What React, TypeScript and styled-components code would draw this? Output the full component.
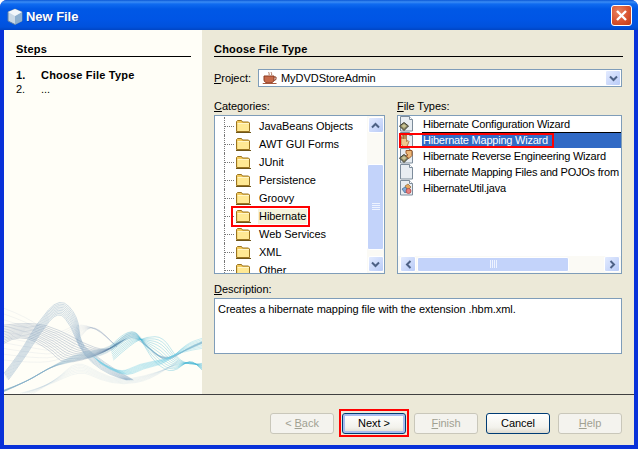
import React from 'react';
import styled, { createGlobalStyle } from 'styled-components';

const GlobalStyle = createGlobalStyle`
html, body { margin: 0; padding: 0; background: #fff; }
body { font-family: "Liberation Sans", "DejaVu Sans", sans-serif; font-size: 11px; letter-spacing: -0.05px; color: #000; }
`;

const Window = styled.div`
width: 638px;
height: 449px;
display: flex;
flex-direction: column;
overflow: hidden;
border-radius: 7px 7px 0 0;
background: #0831d9;
`;

const TitleBar = styled.div`
height: 30px;
flex: none;
display: flex;
align-items: center;
padding: 3px 6px 0 7px;
gap: 3px;
box-sizing: border-box;
background: linear-gradient(180deg, #0a57d6 0, #3a8cf5 2px, #0f6bf0 4px, #0058e6 9px, #0055e5 20px, #0051dc 27px, #0045c4 30px);
`;

const TitleText = styled.span`
flex: 1;
color: #fff;
font-size: 13px;
font-weight: 700;
text-shadow: 1px 1px 0 #0b3ca8;
`;

const CloseButton = styled.div`
width: 21px;
height: 21px;
margin-top: -3px;
box-sizing: border-box;
border: 1px solid #fff;
border-radius: 3px;
background: radial-gradient(circle at 35% 30%, #e8825f, #d9532f 55%, #bd3a16);
display: flex;
align-items: center;
justify-content: center;
`;

const Body = styled.div`
flex: 1;
display: flex;
flex-direction: column;
margin: 0 4px 4px;
background: #ece9d8;
min-height: 0;
`;

const Main = styled.div`
height: 364px;
flex: none;
display: flex;
`;

const StepsPane = styled.div`
width: 198px;
flex: none;
display: flex;
flex-direction: column;
background: #fffef7;
`;

const Heading = styled.div<{ $inset: string }>`
margin: 12px ${p => p.$inset} 0 0;
height: 14px;
line-height: 14px;
font-weight: 700;
letter-spacing: 0.2px;
border-bottom: 1px solid #000;
`;

const StepsInner = styled.div`
padding-left: 12px;
`;

const StepList = styled.div`
margin-top: 11px;
`;

const StepRow = styled.div<{ $current?: boolean }>`
display: flex;
height: 14px;
line-height: 14px;
font-weight: ${p => (p.$current ? 700 : 400)};
letter-spacing: ${p => (p.$current ? '0.2px' : '0')};
`;

const StepNum = styled.span`
width: 25px;
`;

const Wave = styled.svg`
display: block;
margin-top: auto;
width: 198px;
height: 94px;
`;

const ContentPane = styled.div`
flex: 1;
padding: 0 11px 0 12px;
min-width: 0;
`;

const ProjectRow = styled.div`
display: flex;
align-items: center;
margin-top: 12px;
`;

const ProjectLabel = styled.span`
width: 44px;
`;

const Combo = styled.div`
flex: 1;
height: 18px;
margin-right: 1px;
box-sizing: border-box;
border: 1px solid #7f9db9;
background: #fff;
display: flex;
align-items: center;
padding-left: 3px;
gap: 3px;
`;

const ComboText = styled.span`
flex: 1;
`;

const ArrowButton = styled.div`
width: 16px;
height: 16px;
flex: none;
box-sizing: border-box;
border: 1px solid #fff;
border-radius: 2px;
background: linear-gradient(135deg, #e3ebff, #b9cbf7);
display: flex;
align-items: center;
justify-content: center;
`;

const Columns = styled.div`
display: flex;
gap: 12px;
margin-top: 12px;
`;

const Column = styled.div<{ $width: number }>`
width: ${p => p.$width}px;
`;

const Label = styled.div`
height: 14px;
line-height: 14px;
margin-bottom: 2px;
`;

const ListBox = styled.div`
height: 159px;
box-sizing: border-box;
border: 1px solid #7f9db9;
background: #fff;
display: flex;
overflow: hidden;
`;

const TreeBody = styled.div`
flex: 1;
padding-top: 1px;
overflow: hidden;
`;

const TreeRow = styled.div`
height: 18px;
margin-left: 9px;
border-left: 1px dotted #777;
display: flex;
align-items: center;
`;

const Connector = styled.span`
width: 9px;
flex: none;
border-top: 1px dotted #777;
`;

const TreeItem = styled.span<{ $marked?: boolean }>`
display: flex;
align-items: center;
height: 15px;
padding-left: 1px;
outline: ${p => (p.$marked ? '2px solid #f00' : 'none')};
outline-offset: 1px;
`;

const TreeLabel = styled.span<{ $active?: boolean }>`
margin-left: 7px;
padding: 0 1px;
line-height: 15px;
background: ${p => (p.$active ? '#f5f3dc' : 'transparent')};
white-space: nowrap;
`;

const VScroll = styled.div`
width: 17px;
flex: none;
display: flex;
flex-direction: column;
align-items: center;
padding: 1px 0;
box-sizing: border-box;
background: #fbfaf5;
`;

const VTrack = styled.div`
flex: 1;
width: 100%;
padding: 31px 0 6px;
box-sizing: border-box;
display: flex;
justify-content: center;
`;

const Thumb = styled.div`
flex: 1;
box-sizing: border-box;
border: 1px solid #fff;
border-radius: 2px;
background: #c3d3fa;
display: flex;
align-items: center;
justify-content: center;
`;

const FileList = styled.div`
flex: 1;
min-width: 0;
display: flex;
flex-direction: column;
`;

const FileRows = styled.div`
flex: 1;
overflow: hidden;
`;

const FileRow = styled.div`
position: relative;
height: 16px;
display: flex;
align-items: center;
`;

const IconSlot = styled.span`
width: 24px;
padding-left: 1px;
box-sizing: border-box;
flex: none;
display: flex;
`;

const FileLabel = styled.span<{ $selected?: boolean }>`
flex: 1;
box-sizing: border-box;
height: 16px;
line-height: 16px;
padding-left: 1px;
letter-spacing: -0.22px;
white-space: nowrap;
overflow: hidden;
color: ${p => (p.$selected ? '#fff' : '#000')};
background: ${p => (p.$selected ? '#316ac5' : 'transparent')};
box-shadow: ${p => (p.$selected ? 'inset 0 1px 0 #000' : 'none')};
`;

const RedBox = styled.div`
position: absolute;
left: 1px;
top: 1px;
width: 151px;
height: 11px;
border: 2px solid #f00;
pointer-events: none;
`;

const HScroll = styled.div`
height: 16px;
flex: none;
display: flex;
align-items: center;
padding: 0 1px 1px 2px;
background: #fbfaf5;
`;

const HThumb = styled(Thumb)`
flex: none;
width: 152px;
height: 15px;
margin-left: 1px;
`;

const HGap = styled.div`
flex: 1;
`;

const DescBox = styled.div`
height: 56px;
box-sizing: border-box;
border: 1px solid #7f9db9;
background: #fff;
padding: 3px 3px;
line-height: 15px;
margin-right: 1px;
`;

const DescLabel = styled(Label)`
margin-top: 8px;
`;

const Footer = styled.div`
flex: 1;
border-top: 1px solid #404040;
display: flex;
align-items: flex-start;
justify-content: flex-end;
gap: 8px;
padding: 18px 12px 0 0;
`;

const Button = styled.div<{ $kind: 'disabled' | 'normal' | 'default' }>`
width: 64px;
height: 21px;
box-sizing: border-box;
border-radius: 3px;
text-align: center;
line-height: 19px;
border: 1px solid ${p => (p.$kind === 'disabled' ? '#c9c7ba' : '#003c74')};
color: ${p => (p.$kind === 'disabled' ? '#a1a192' : '#000')};
background: ${p => (p.$kind === 'disabled' ? '#f4f3ee' : 'linear-gradient(180deg, #fff, #f3f2ec 70%, #dedbd0)')};
box-shadow: ${p => (p.$kind === 'default' ? 'inset 0 0 0 2px #a9bdf0' : 'none')};
`;

const MarkedFrame = styled.div`
border: 2px solid #f00;
padding: 2px 1px 1px;
margin: -4px -3px -3px;
`;

const Key = styled.span`
text-decoration: underline;
`;

/* icons */
const FolderIcon = () => (
  <svg width="16" height="14" viewBox="0 0 16 14" style={{ flex: 'none' }}>
    <path d="M1.500 12.500V2.500l1-1h4l1 1.500h6l1 1v8.500z" fill="#f3c95a" stroke="#9a7420" />
    <path d="M2.500 5h11.500v7H2.500z" fill="#ffe994" />
    <path d="M2.500 4.500h11.500" stroke="#fff6c8" />
    <path d="M1 13.500h15" stroke="#6e5518" />
  </svg>
);

const CupIcon = () => (
  <svg width="16" height="14" viewBox="0 0 16 14">
    <path d="M7 1c-1 1 1 1.500 0 3M9.500 1c-1 1 1 1.500 0 3" stroke="#b0745c" fill="none" />
    <path d="M2 5h10v4c0 2-2 3-5 3s-5-1-5-3z" fill="#c66a4a" stroke="#8a3a20" />
    <path d="M12 6h2v2.500l-2 1" fill="none" stroke="#8a3a20" />
    <path d="M0.500 12h14v1H1z" fill="#a8593e" />
  </svg>
);

const CubeIcon = () => (
  <svg width="16" height="17" viewBox="0 0 16 17">
    <path d="M8 1l7 3v9l-7 3.500L1 13V4z" fill="#c9d8e6" stroke="#5a7fa8" />
    <path d="M8 8l7-4v9l-7 3.500z" fill="#8fb0cf" />
    <path d="M1 4l7 4 7-4-7-3z" fill="#f2f6fa" />
  </svg>
);

const PageBase = () => (
  <>
    <path d="M1.500 .5h9l3 3v11.500h-12z" fill="#e8edf2" stroke="#7d8c9b" />
    <path d="M10.500 .5v3h3" fill="#fff" stroke="#7d8c9b" />
  </>
);

const HibernateIcon = ({ kind }: { kind: string }) => (
  <svg width="16" height="16" viewBox="0 0 16 16">
    <PageBase />
    {(kind === 'config' || kind === 'reverse') && (
      <>
        <path d="M0.500 10l4.500-3.500 4.500 3.500-4.500 4.500z" fill="#8e8a62" stroke="#3c3c32" />
        <path d="M2.500 10l2.500-2 2.500 2-2.500 2z" fill="#c9c498" />
      </>
    )}
    {kind === 'reverse' && <path d="M7 2.500h6v5l-3 3-3-2.500 2-1-2-1.500z" fill="#edb878" stroke="#9a5a2a" />}
    {kind === 'hand' && (
      <path d="M2 8V5h1v2V3h1.500v4V2h1.500v5V3h1.500v6.500L9 8.500l1 1-2 5H4l-2-3z" fill="#f0c890" stroke="#a06a3a" strokeWidth=".8" />
    )}
    {kind === 'util' && (
      <>
        <path d="M6 6l3-2 3 3-3 3z" fill="#e8a860" stroke="#8a6a3a" strokeWidth=".7" />
        <path d="M3 9l3-2 3 3-3 3z" fill="#7fa8d8" stroke="#44688a" strokeWidth=".7" />
        <circle cx="9.500" cy="11" r="2.500" fill="#e87f7f" stroke="#a83a3a" strokeWidth=".7" />
      </>
    )}
  </svg>
);

const Chevron = ({ dir }: { dir: 'up' | 'down' | 'left' | 'right' }) => {
  const rotate = { up: 0, right: 90, down: 180, left: 270 }[dir];
  return (
    <svg width="9" height="7" viewBox="0 0 9 7" style={{ transform: `rotate(${rotate}deg)` }}>
      <path d="M1 5.500l3.500-3.500 3.500 3.500" fill="none" stroke="#4d6185" strokeWidth="2" />
    </svg>
  );
};

const Grip = ({ vertical }: { vertical?: boolean }) => (
  <svg width="8" height="8" viewBox="0 0 8 8" style={vertical ? { transform: 'rotate(90deg)' } : undefined}>
    {[0.5, 2.5, 4.5, 6.5].map(y => (
      <path key={y} d={`M0 ${y}h8`} stroke="#eef3ff" />
    ))}
  </svg>
);

/* wave art: ribbons interpolated between two key curves */
type Pt = [number, number];

const smooth = (pts: Pt[]) => {
  let d = `M${pts[0][0]} ${pts[0][1]}`;
  for (let i = 1; i < pts.length - 1; i++) {
    const mx = (pts[i][0] + pts[i + 1][0]) / 2;
    const my = (pts[i][1] + pts[i + 1][1]) / 2;
    d += `Q${pts[i][0]} ${pts[i][1]} ${mx} ${my}`;
  }
  const last = pts[pts.length - 1];
  return `${d}L${last[0]} ${last[1]}`;
};

const ribbons: { a: Pt[]; b: Pt[]; n: number; color: string; op: number }[] = [
  { a: [[12, 85], [80, 110], [160, 170], [230, 130], [290, 145], [350, 200]], b: [[12, 240], [100, 250], [190, 240], [240, 170], [280, 130], [350, 200]], n: 10, color: '#8fa4bb', op: 0.22 },
  { a: [[100, 340], [170, 300], [230, 240], [300, 280], [360, 300], [430, 290], [520, 260]], b: [[60, 340], [140, 320], [240, 270], [300, 300], [370, 315], [450, 300], [540, 240]], n: 7, color: '#9fbfd4', op: 0.28 },
  { a: [[12, 135], [100, 125], [180, 150], [250, 190], [320, 215], [380, 175]], b: [[12, 190], [60, 160], [110, 160], [150, 210], [190, 255], [240, 250], [300, 225], [350, 190]], n: 12, color: '#4f6d94', op: 0.5 },
  { a: [[12, 280], [60, 220], [110, 130], [180, 50], [235, 110], [240, 190], [290, 230], [340, 265], [400, 300]], b: [[25, 300], [70, 240], [120, 160], [175, 90], [215, 140], [235, 200], [275, 250], [330, 285], [380, 300]], n: 9, color: '#5d89b2', op: 0.58 },
  { a: [[12, 330], [70, 310], [130, 275], [190, 240], [250, 215], [330, 205], [400, 140], [440, 200], [500, 250], [560, 205], [606, 185]], b: [[12, 335], [90, 300], [150, 260], [200, 250], [250, 235], [320, 225], [390, 165], [430, 190], [490, 240], [550, 215], [606, 190]], n: 10, color: '#7fa8c4', op: 0.45 },
  { a: [[330, 200], [395, 130], [440, 210], [470, 255], [520, 280], [570, 235], [606, 270]], b: [[340, 240], [395, 190], [440, 170], [490, 170], [530, 235], [570, 255], [606, 250]], n: 10, color: '#45b6d4', op: 0.65 },
  { a: [[300, 250], [370, 295], [430, 265], [500, 250], [560, 190], [606, 175]], b: [[280, 230], [350, 285], [420, 250], [490, 240], [550, 215], [606, 205]], n: 8, color: '#6ccbe2', op: 0.65 },
];

const WaveArt = () => (
  <Wave viewBox="12 60 594 282" preserveAspectRatio="none">
    {ribbons.map((r, ri) =>
      Array.from({ length: r.n }, (_, i) => {
        const t = i / (r.n - 1);
        const len = Math.min(r.a.length, r.b.length);
        const pts: Pt[] = [];
        for (let k = 0; k < len; k++) {
          const ka = r.a[Math.round((k * (r.a.length - 1)) / (len - 1))];
          const kb = r.b[Math.round((k * (r.b.length - 1)) / (len - 1))];
          pts.push([ka[0] + (kb[0] - ka[0]) * t, ka[1] + (kb[1] - ka[1]) * t]);
        }
        return <path key={`${ri}-${i}`} d={smooth(pts)} fill="none" stroke={r.color} strokeOpacity={r.op} strokeWidth="1.500" />;
      })
    )}
  </Wave>
);

const categories = ['JavaBeans Objects', 'AWT GUI Forms', 'JUnit', 'Persistence', 'Groovy', 'Hibernate', 'Web Services', 'XML', 'Other'];

const fileTypes = [
  { name: 'Hibernate Configuration Wizard', icon: 'config' },
  { name: 'Hibernate Mapping Wizard', icon: 'hand', selected: true },
  { name: 'Hibernate Reverse Engineering Wizard', icon: 'reverse' },
  { name: 'Hibernate Mapping Files and POJOs from', icon: 'page' },
  { name: 'HibernateUtil.java', icon: 'util' },
];

const App: React.FC = () => {
  return (
    <Window>
      <GlobalStyle />
      <TitleBar>
        <CubeIcon />
        <TitleText>New File</TitleText>
        <CloseButton>
          <svg width="13" height="13" viewBox="0 0 13 13">
            <path d="M2 2l9 9M11 2l-9 9" stroke="#fff" strokeWidth="2.400" />
          </svg>
        </CloseButton>
      </TitleBar>
      <Body>
        <Main>
          <StepsPane>
            <StepsInner>
              <Heading $inset="11px">Steps</Heading>
              <StepList>
                <StepRow $current><StepNum>1.</StepNum>Choose File Type</StepRow>
                <StepRow><StepNum>2.</StepNum>...</StepRow>
              </StepList>
            </StepsInner>
            <WaveArt />
          </StepsPane>
          <ContentPane>
            <Heading $inset="0">Choose File Type</Heading>
            <ProjectRow>
              <ProjectLabel><Key>P</Key>roject:</ProjectLabel>
              <Combo>
                <CupIcon />
                <ComboText>MyDVDStoreAdmin</ComboText>
                <ArrowButton><Chevron dir="down" /></ArrowButton>
              </Combo>
            </ProjectRow>
            <Columns>
              <Column $width={171}>
                <Label><Key>C</Key>ategories:</Label>
                <ListBox>
                  <TreeBody>
                    {categories.map(c => (
                      <TreeRow key={c}>
                        <Connector />
                        <TreeItem $marked={c === 'Hibernate'}>
                          <FolderIcon />
                          <TreeLabel $active={c === 'Hibernate'}>{c}</TreeLabel>
                        </TreeItem>
                      </TreeRow>
                    ))}
                  </TreeBody>
                  <VScroll>
                    <ArrowButton><Chevron dir="up" /></ArrowButton>
                    <VTrack><Thumb><Grip /></Thumb></VTrack>
                    <ArrowButton><Chevron dir="down" /></ArrowButton>
                  </VScroll>
                </ListBox>
              </Column>
              <Column $width={225}>
                <Label><Key>F</Key>ile Types:</Label>
                <ListBox>
                  <FileList>
                    <FileRows>
                      {fileTypes.map(f => (
                        <FileRow key={f.name}>
                          <IconSlot><HibernateIcon kind={f.icon} /></IconSlot>
                          <FileLabel $selected={f.selected}>{f.name}</FileLabel>
                          {f.selected && <RedBox />}
                        </FileRow>
                      ))}
                    </FileRows>
                    <HScroll>
                      <ArrowButton><Chevron dir="left" /></ArrowButton>
                      <HThumb><Grip vertical /></HThumb>
                      <HGap />
                      <ArrowButton><Chevron dir="right" /></ArrowButton>
                    </HScroll>
                  </FileList>
                </ListBox>
              </Column>
            </Columns>
            <DescLabel><Key>D</Key>escription:</DescLabel>
            <DescBox>Creates a hibernate mapping file with the extension .hbm.xml.</DescBox>
          </ContentPane>
        </Main>
        <Footer>
          <Button $kind="disabled">&lt; <Key>B</Key>ack</Button>
          <MarkedFrame><Button $kind="default">Next &gt;</Button></MarkedFrame>
          <Button $kind="disabled"><Key>F</Key>inish</Button>
          <Button $kind="normal">Cancel</Button>
          <Button $kind="disabled"><Key>H</Key>elp</Button>
        </Footer>
      </Body>
    </Window>
  );
};

export default App;
